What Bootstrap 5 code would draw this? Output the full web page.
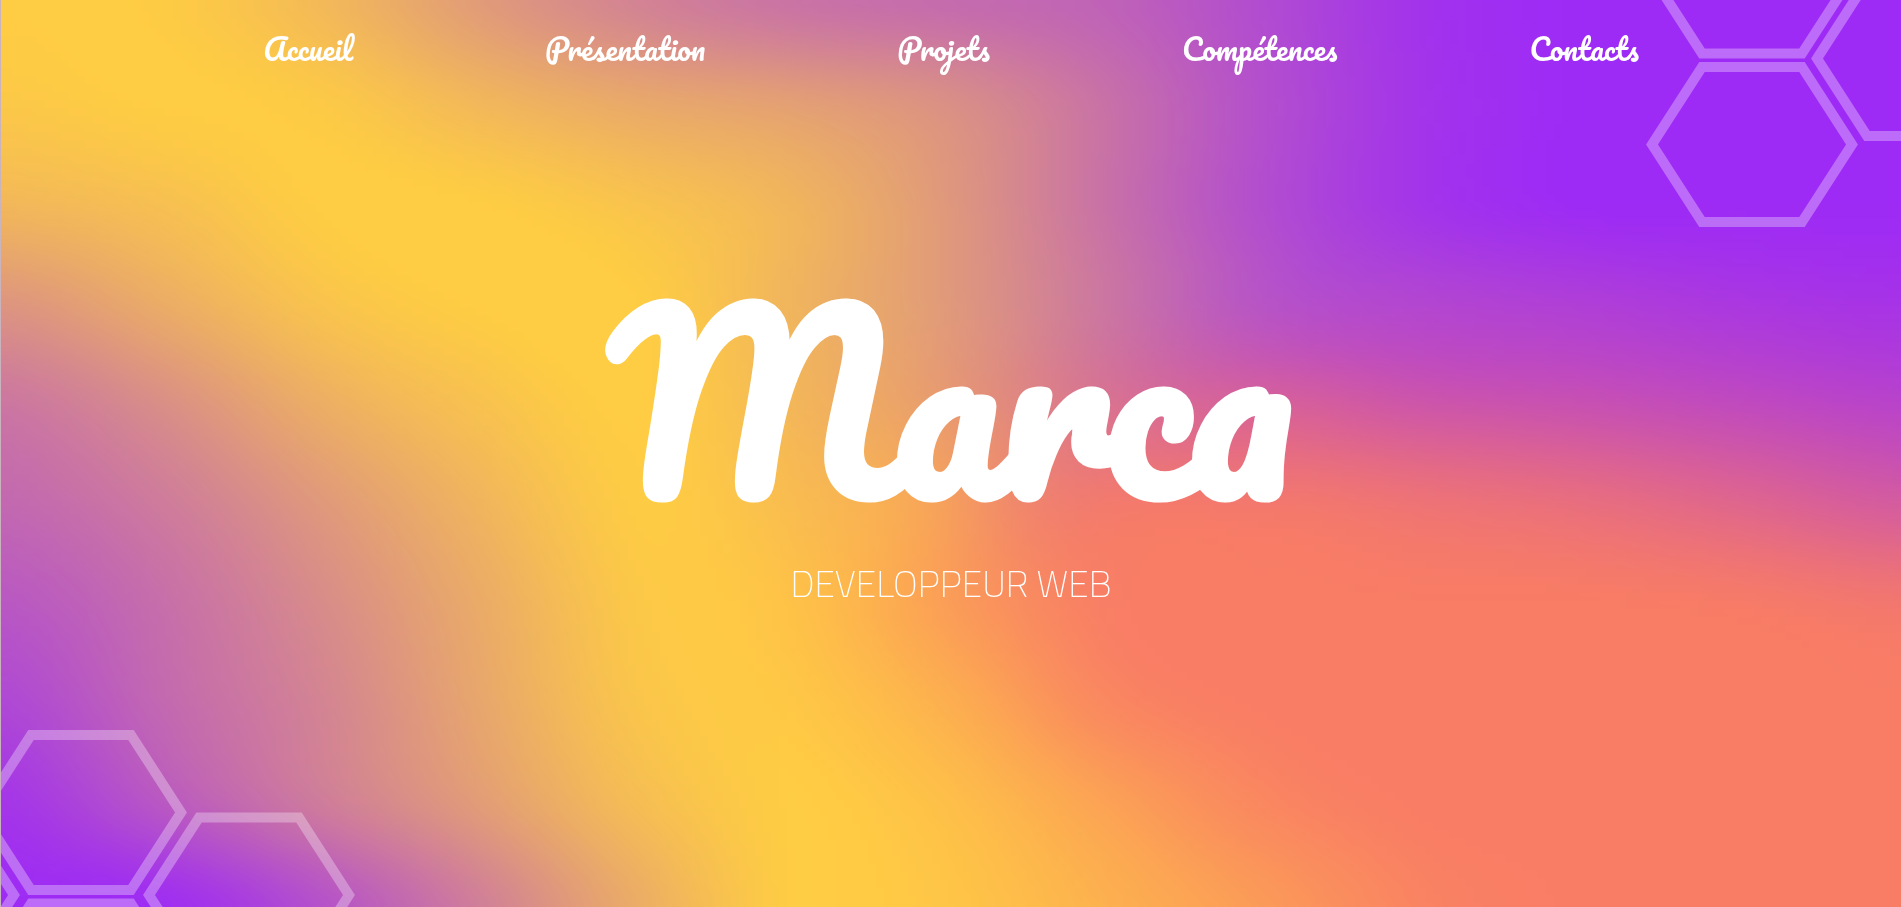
<!DOCTYPE html>
<html lang="fr">
<head>
<meta charset="utf-8">
<meta name="viewport" content="width=device-width, initial-scale=1">
<title>Marca - Développeur web</title>
<link href="https://cdn.jsdelivr.net/npm/bootstrap@5.3.0/dist/css/bootstrap.min.css" rel="stylesheet">
<style>
  :root { --script: Pacifico, Lato, sans-serif; }
  .hero { background: #f5a35c; border-left: 1px solid #c9b3bd; isolation: isolate; }
  .mesh { z-index: -2; }
  .combs { z-index: -1; fill: none; stroke: #fff; stroke-width: 10px; stroke-opacity: .31; }
  .menu { padding: 29px 13.8% 0; }
  .menu .nav-link {
    font: 400 30px/40px var(--script);
    color: #fff; padding: 0;
  }
  .stage { padding-bottom: 90px; }
  .brand {
    font: 700 230px/240px var(--script);
    margin: 0 0 39px;
  }
  .role { font: 200 37px/48px "Titillium Web", Roboto, sans-serif; margin: 0; }
</style>
</head>
<body>
<div class="hero position-relative overflow-hidden min-vh-100 d-flex flex-column text-white">
  <canvas class="mesh position-absolute top-0 start-0 w-100 h-100" width="238" height="114" aria-hidden="true"></canvas>

  <svg class="combs position-absolute top-0 end-0" width="261" height="240" viewBox="1640 0 261 240" aria-hidden="true">
    <defs><path id="hex" d="M-100 0 L-50 -77.5 H50 L100 0 L50 77.5 H-50 Z"/></defs>
    <use href="#hex" x="1752" y="144.5"/>
    <use href="#hex" x="1752" y="-24"/>
    <use href="#hex" x="1917" y="58.5"/>
  </svg>
  <svg class="combs position-absolute bottom-0 start-0" width="370" height="197" viewBox="1 710 370 197" aria-hidden="true">
    <use href="#hex" x="81" y="812.5"/>
    <use href="#hex" x="249" y="895"/>
    <use href="#hex" x="81" y="981"/>
    <use href="#hex" x="-86" y="895"/>
  </svg>

  <header>
    <nav aria-label="Menu principal">
      <ul class="menu nav justify-content-between">
        <li class="nav-item"><a class="nav-link" href="#accueil">Accueil</a></li>
        <li class="nav-item"><a class="nav-link" href="#presentation">Présentation</a></li>
        <li class="nav-item"><a class="nav-link" href="#projets">Projets</a></li>
        <li class="nav-item"><a class="nav-link" href="#competences">Compétences</a></li>
        <li class="nav-item"><a class="nav-link" href="#contacts">Contacts</a></li>
      </ul>
    </nav>
  </header>

  <main id="accueil" class="stage flex-grow-1 d-flex flex-column justify-content-center align-items-center text-center">
    <h1 class="brand">Marca</h1>
    <p class="role">DEVELOPPEUR WEB</p>
  </main>
</div>

<script src="https://cdn.jsdelivr.net/npm/bootstrap@5.3.0/dist/js/bootstrap.bundle.min.js"></script>
<script>
  // Mesh gradient: share of violet over yellow, then share of coral over both.
  const violet = [
    [0,.01,.12,.3,.45,.55,.6,.66,.8,.95,1,1,1],
    [.03,0,.02,.13,.22,.28,.38,.57,.78,.94,1,1,1],
    [.13,.08,0,0,.06,.15,.33,.57,.79,.94,1,1,1],
    [.34,.2,.06,0,0,.15,.32,.54,.76,.88,.94,.98,1],
    [.53,.38,.19,.07,0,.12,.28,.6,.9,1,1,1,1],
    [.62,.5,.32,.15,.01,.06,.12,.6,1,1,1,1,1],
    [.72,.58,.4,.21,.03,0,.02,.2,1,1,1,1,1],
    [.82,.62,.45,.24,.05,0,0,0,0,1,1,1,1],
    [.93,.72,.5,.3,.1,0,0,0,0,0,0,0,0],
    [1,.98,.76,.48,.2,0,0,0,0,0,0,0,0]
  ];
  const coral = [
    [0,0,0,0,0,0,0,0,0,0,0,0,0],
    [0,0,0,0,0,0,0,0,0,0,0,0,0],
    [0,0,0,0,0,0,0,0,0,0,0,0,0],
    [0,0,0,0,0,0,0,0,.04,.12,.14,.12,.1],
    [0,0,0,0,0,.05,.2,.4,.58,.52,.46,.38,.3],
    [0,0,0,0,0,.1,.45,.88,.94,.88,.82,.72,.6],
    [0,0,0,0,0,.14,.58,.96,1,1,1,.98,.93],
    [0,0,0,0,0,.07,.38,.86,1,1,1,1,1],
    [0,0,0,0,0,0,.18,.54,.87,1,1,1,1],
    [0,0,0,0,0,0,.1,.36,.64,.92,1,1,1]
  ];
  const Y = [255,205,67], V = [158,43,245], C = [249,125,101];
  const mix = (a, b, t) => a + (b - a) * t;
  const clamp = (v, lo, hi) => Math.max(lo, Math.min(hi, v));
  const spline = (a, b, c, d, t) =>
    b + t * (c - a + t * (2*a - 5*b + 4*c - d + t * (3*(b - c) + d - a))) / 2;
  function sample(table, x, y) {
    const gx = Math.floor(x), gy = Math.floor(y);
    const at = (i, j) => table[clamp(j, 0, 9)][clamp(i, 0, 12)];
    const line = j => spline(at(gx-1, j), at(gx, j), at(gx+1, j), at(gx+2, j), x - gx);
    return clamp(spline(line(gy-1), line(gy), line(gy+1), line(gy+2), y - gy), 0, 1);
  }
  const canvas = document.querySelector('.mesh'), ctx = canvas.getContext('2d');
  const img = ctx.createImageData(canvas.width, canvas.height);
  for (let y = 0, p = 0; y < canvas.height; y++) {
    for (let x = 0; x < canvas.width; x++, p += 4) {
      const u = x / (canvas.width - 1) * 12, v = y / (canvas.height - 1) * 9;
      const t = sample(violet, u, v), c = sample(coral, u, v);
      for (let k = 0; k < 3; k++) img.data[p + k] = mix(mix(Y[k], V[k], t), C[k], c);
      img.data[p + 3] = 255;
    }
  }
  ctx.putImageData(img, 0, 0);
</script>
</body>
</html>
